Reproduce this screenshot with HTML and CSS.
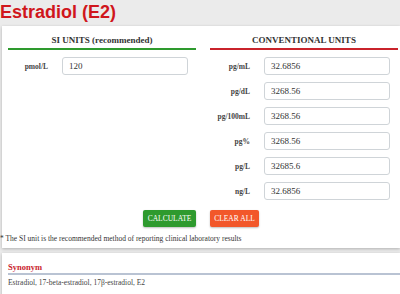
FILE: index.html
```html
<!DOCTYPE html>
<html lang="en">
<head>
    <meta charset="UTF-8">
    <meta name="viewport" content="width=device-width, initial-scale=1.0">
    <title>Estradiol (E2) Converter</title>
    <link rel="stylesheet" href="styles.css">
</head>
<body>
    <h1 class="title">Estradiol (E2)</h1>

    <div class="card converter">
        <div class="columns">
            <div class="column">
                <h2 class="col-head si">SI UNITS (recommended)</h2>
                <div class="row">
                    <label for="pmol">pmol/L</label>
                    <input type="text" id="pmol" value="120">
                </div>
            </div>
            <div class="column">
                <h2 class="col-head conv">CONVENTIONAL UNITS</h2>
                <div class="row">
                    <label for="pgml">pg/mL</label>
                    <input type="text" id="pgml" value="32.6856">
                </div>
                <div class="row">
                    <label for="pgdl">pg/dL</label>
                    <input type="text" id="pgdl" value="3268.56">
                </div>
                <div class="row">
                    <label for="pg100">pg/100mL</label>
                    <input type="text" id="pg100" value="3268.56">
                </div>
                <div class="row">
                    <label for="pgpct">pg%</label>
                    <input type="text" id="pgpct" value="3268.56">
                </div>
                <div class="row">
                    <label for="pgl">pg/L</label>
                    <input type="text" id="pgl" value="32685.6">
                </div>
                <div class="row">
                    <label for="ngl">ng/L</label>
                    <input type="text" id="ngl" value="32.6856">
                </div>
            </div>
        </div>
        <div class="buttons">
            <div class="btn-cell left"><button class="btn calc">CALCULATE</button></div>
            <div class="btn-cell"><button class="btn clear">CLEAR ALL</button></div>
        </div>
        <p class="note">* The SI unit is the recommended method of reporting clinical laboratory results</p>
    </div>

    <div class="card synonym">
        <h3>Synonym</h3>
        <p>Estradiol, 17-beta-estradiol, 17β-estradiol, E2</p>
    </div>
</body>
</html>
```

FILE: styles.css
```css
body {
    margin: 0;
    padding: 0;
    background-color: #ebebeb;
    font-family: 'Liberation Serif', 'Times New Roman', serif;
    color: #333;
    overflow: hidden;
}

.title {
    margin: 0;
    height: 26px;
    padding: 2px 0 0 0;
    box-sizing: border-box;
    font-family: 'Liberation Sans', Arial, sans-serif;
    font-size: 18px;
    font-weight: bold;
    color: #d0161c;
    line-height: 20px;
}

.card {
    margin-left: 2px;
    background-color: #fff;
    box-shadow: 0 1px 3px rgba(0, 0, 0, 0.25);
}

.converter {
    height: 222px;
    box-sizing: border-box;
}

.columns {
    display: grid;
    grid-template-columns: 188px 188px;
    column-gap: 14px;
    padding: 0 0 0 6px;
}

.col-head {
    margin: 0;
    padding: 9px 0 0 0;
    height: 13px;
    text-align: center;
    font-family: 'Liberation Serif', 'Times New Roman', serif;
    font-size: 9px;
    font-weight: bold;
    color: #333;
    line-height: 11px;
}

.col-head.si {
    border-bottom: 2px solid #2e9a2e;
}

.col-head.conv {
    border-bottom: 2px solid #c9232b;
}

.row {
    display: flex;
    align-items: center;
    gap: 14px;
    margin-top: 7px;
    height: 18px;
}

.row label {
    width: 40px;
    text-align: right;
    font-size: 7.5px;
    font-weight: bold;
    color: #444;
}

.row input {
    width: 126px;
    height: 18px;
    box-sizing: border-box;
    padding: 0 0 0 6px;
    border: 1px solid #cfd4d8;
    border-radius: 3px;
    font-family: 'Liberation Serif', 'Times New Roman', serif;
    font-size: 9px;
    color: #333;
    outline: none;
}

.buttons {
    display: grid;
    grid-template-columns: 188px 188px;
    column-gap: 14px;
    padding: 0 0 0 6px;
    margin-top: 10px;
}

.btn-cell {
    display: flex;
    align-items: center;
}

.btn-cell.left {
    justify-content: flex-end;
}

.btn {
    height: 17px;
    padding: 0;
    border: none;
    border-radius: 2px;
    white-space: nowrap;
    font-family: 'Liberation Serif', 'Times New Roman', serif;
    font-size: 7.5px;
    color: #fff;
    box-shadow: 0 1px 2px rgba(0, 0, 0, 0.25);
}

.btn.calc {
    width: 53px;
    background-color: #2e9a2e;
}

.btn.clear {
    width: 49px;
    background-color: #f2572a;
}

.note {
    margin: 7px 0 0 -2px;
    font-size: 7.5px;
    color: #333;
    line-height: 10px;
}

.synonym {
    margin-top: 5px;
    height: 45px;
    padding: 9px 0 0 6px;
    box-sizing: border-box;
}

.synonym h3 {
    margin: 0;
    padding-bottom: 1px;
    border-bottom: 2px solid #b9c3d3;
    font-size: 8.5px;
    font-weight: bold;
    color: #c9232b;
    line-height: 10px;
}

.synonym p {
    margin: 3px 0 0 0;
    font-size: 7.5px;
    color: #444;
    line-height: 10px;
}
```
